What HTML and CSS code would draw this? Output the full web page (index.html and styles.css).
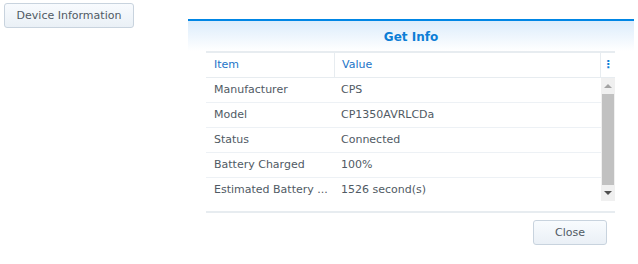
FILE: index.html
```html
<!DOCTYPE html>
<html lang="en">
<head>
    <meta charset="UTF-8">
    <title>Get Info</title>
    <link rel="stylesheet" href="styles.css">
</head>
<body>
    <div class="page">
        <button class="btn device-btn">Device Information</button>
        <div class="dialog">
            <div class="dialog-title">Get Info</div>
            <div class="grid">
                <div class="grid-head">
                    <div class="cell col-item">Item</div>
                    <div class="cell col-value">Value</div>
                    <div class="menu-dots">&#8942;</div>
                </div>
                <div class="grid-body">
                    <div class="rows">
                        <div class="row"><div class="cell col-item">Manufacturer</div><div class="cell col-value">CPS</div></div>
                        <div class="row"><div class="cell col-item">Model</div><div class="cell col-value">CP1350AVRLCDa</div></div>
                        <div class="row"><div class="cell col-item">Status</div><div class="cell col-value">Connected</div></div>
                        <div class="row"><div class="cell col-item">Battery Charged</div><div class="cell col-value">100%</div></div>
                        <div class="row"><div class="cell col-item">Estimated Battery ...</div><div class="cell col-value">1526 second(s)</div></div>
                    </div>
                    <div class="scrollbar">
                        <div class="arrow up"></div>
                        <div class="thumb"></div>
                        <div class="arrow down"></div>
                    </div>
                </div>
            </div>
            <div class="dialog-foot">
                <button class="btn close-btn">Close</button>
            </div>
        </div>
    </div>
</body>
</html>
```

FILE: styles.css
```css
body {
    margin: 0;
    font-family: Verdana, "DejaVu Sans", sans-serif;
    font-size: 11px;
    color: #505a64;
    background: #ffffff;
}
.page {
    display: flex;
    align-items: flex-start;
    padding: 3px 0 0 4px;
}
.btn {
    font-family: inherit;
    font-size: 11px;
    color: #505a64;
    background: linear-gradient(#f8fbfe, #eaf0f6);
    border: 1px solid #c8d3de;
    border-radius: 3px;
    padding: 0;
    height: 25px;
}
.device-btn {
    width: 130px;
}
.dialog {
    margin: 16px 0 0 54px;
    width: 446px;
    border-top: 2px solid #0086e5;
}
.dialog-title {
    height: 29px;
    padding-top: 1px;
    line-height: 30px;
    text-align: center;
    font-weight: bold;
    color: #0c7ed6;
    font-size: 12px;
    background: linear-gradient(#dcecfb, #ffffff);
}
.grid {
    margin: 0 19px 0 18px;
    border-bottom: 2px solid #e7ecf0;
}
.grid-head {
    display: flex;
    height: 24px;
    border-top: 2px solid #e7ecf0;
    border-bottom: 1px solid #e7ecf0;
}
.grid-head .cell {
    color: #1c74c8;
}
.cell {
    line-height: 24px;
    padding-left: 8px;
    white-space: nowrap;
}
.col-item {
    width: 120px;
}
.col-value {
    flex: 1;
    padding-left: 7px;
}
.grid-head .col-item {
    border-right: 1px solid #e7ecf0;
}
.menu-dots {
    width: 14px;
    color: #0c7ed6;
    line-height: 24px;
    text-align: center;
    font-weight: bold;
    border-left: 1px solid #e7ecf0;
}
.grid-body {
    display: flex;
    height: 123px;
    padding-bottom: 10px;
}
.rows {
    flex: 1;
}
.row {
    display: flex;
    height: 24px;
    border-bottom: 1px solid #edf1f5;
}
.row:last-child {
    border-bottom: none;
}
.scrollbar {
    width: 14px;
    background: #f0f0f0;
    display: flex;
    flex-direction: column;
    align-items: center;
}
.arrow {
    width: 0;
    height: 0;
    border-left: 4px solid transparent;
    border-right: 4px solid transparent;
    margin: 6px 0;
}
.arrow.up {
    border-bottom: 4px solid #a3a3a3;
}
.arrow.down {
    border-top: 4px solid #505050;
}
.thumb {
    flex: 1;
    width: 12px;
    background: #c1c1c1;
}
.dialog-foot {
    display: flex;
    justify-content: flex-end;
    padding: 7px 27px 0 0;
}
.close-btn {
    width: 74px;
}
```
